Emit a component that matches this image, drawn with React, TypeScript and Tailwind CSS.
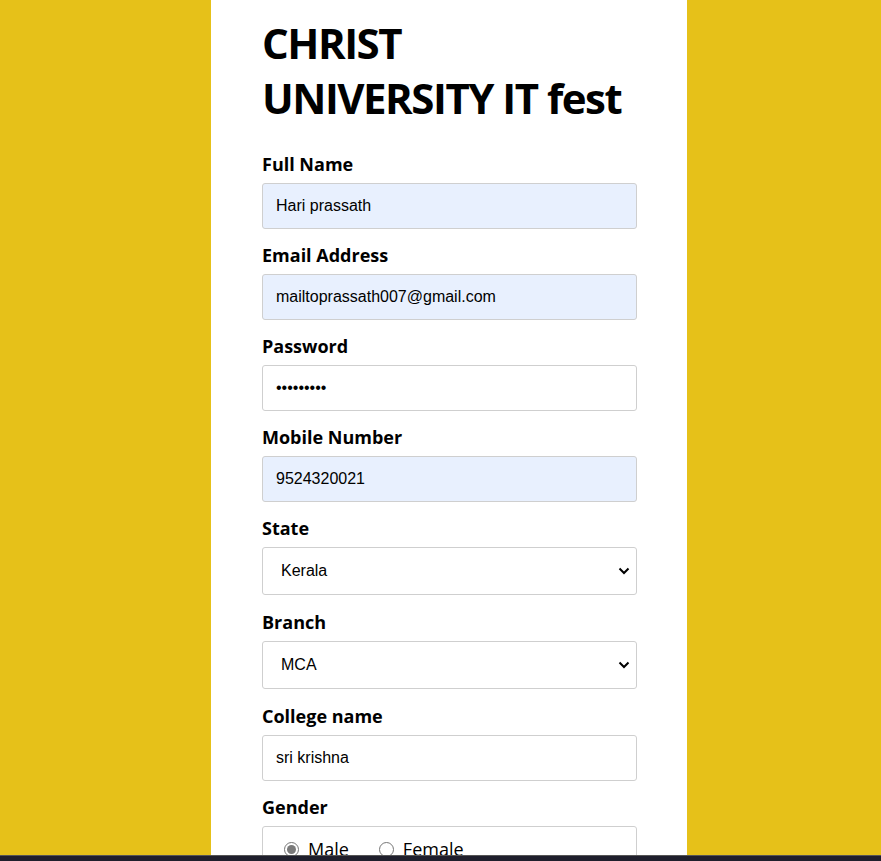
import React from "react";

const label = "block text-[18px] leading-6 font-bold text-black font-['Open_Sans',sans-serif] mb-[7px]";
const field =
  "w-full h-[46px] border border-[#cfcfcf] rounded-[3px] px-[13px] text-[16px] text-black font-['Liberation_Sans',Arial,sans-serif] flex items-center";

const Field = ({ name, value, filled }: { name: string; value: string; filled?: boolean }) => (
  <div className="mb-[14px]">
    <label className={label}>{name}</label>
    <div className={`${field} ${filled ? "bg-[#e8f0fe]" : "bg-white"}`}>{value}</div>
  </div>
);

const Select = ({ name, value }: { name: string; value: string }) => (
  <div className="mb-[15px]">
    <label className={label}>{name}</label>
    <div className={`${field} h-[48px] pl-[18px] pr-[5px] justify-between bg-white`}>
      <span>{value}</span>
      <svg width="12" height="8" viewBox="0 0 12 8" className="mr-[1px]">
        <path d="M1.5 1.5 L6 6 L10.5 1.5" fill="none" stroke="#000" strokeWidth="2" />
      </svg>
    </div>
  </div>
);

const Radio = ({ checked, text }: { checked?: boolean; text: string }) => (
  <span className="flex items-center gap-[9px]">
    <span className="w-[15px] h-[15px] rounded-full border border-[#767676] flex items-center justify-center bg-white">
      {checked && <span className="w-[9px] h-[9px] rounded-full bg-[#7a7a7a]" />}
    </span>
    <span className="text-[18px] font-['Open_Sans',sans-serif] text-black">{text}</span>
  </span>
);

export default function App() {
  return (
    <div className="min-h-[861px] bg-[#e6c119] flex">
      <div className="ml-[211px] w-[476px] bg-white pl-[51px] pr-[50px] pt-[15px] pb-10">
        <h1 className="text-[42px] leading-[55px] font-bold text-black font-['Open_Sans',sans-serif] tracking-[-1.5px] whitespace-nowrap mb-[27px]">
          CHRIST
          <br />
          UNIVERSITY IT fest
        </h1>
        <Field name="Full Name" value="Hari prassath" filled />
        <Field name="Email Address" value="mailtoprassath007@gmail.com" filled />
        <Field name="Password" value="•••••••••" />
        <Field name="Mobile Number" value="9524320021" filled />
        <Select name="State" value="Kerala" />
        <Select name="Branch" value="MCA" />
        <Field name="College name" value="sri krishna" />
        <div>
          <label className={label}>Gender</label>
          <div className="w-full h-[60px] border border-[#cfcfcf] rounded-[3px] px-[21px] pt-[9px] flex items-start gap-[30px]">
            <Radio checked text="Male" />
            <Radio text="Female" />
          </div>
        </div>
      </div>
      <div className="fixed left-0 right-0 bottom-0 h-[6px] bg-[#1f1f2c] border-t border-[#555]" />
    </div>
  );
}
